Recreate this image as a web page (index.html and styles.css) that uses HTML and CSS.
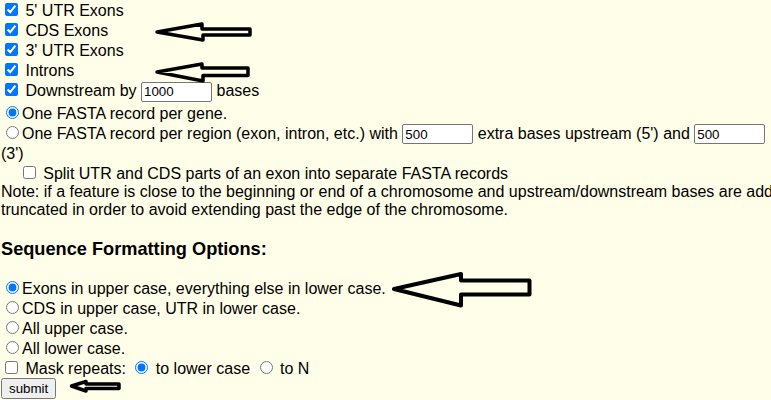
FILE: index.html
```html
<!DOCTYPE html>
<html>
<head>
<meta charset="utf-8">
<link rel="stylesheet" href="styles.css">
</head>
<body>
<div class="page">
<div class="opts">
<input type="checkbox" checked> 5' UTR Exons<br>
<input type="checkbox" checked> CDS Exons<br>
<input type="checkbox" checked> 3' UTR Exons<br>
<input type="checkbox" checked> Introns<br>
<input type="checkbox" checked> Downstream by <input type="text" class="num" value="1000"> bases<br>
<input type="radio" name="rec" checked>One FASTA record per gene.<br>
<input type="radio" name="rec">One FASTA record per region (exon, intron, etc.) with <input type="text" class="num" value="500"> extra bases upstream (5') and <input type="text" class="num" value="500"> (3')<br>
<span class="split">&nbsp;&nbsp;&nbsp;&nbsp;<input type="checkbox"> Split UTR and CDS parts of an exon into separate FASTA records</span><br>
<span class="note">Note: if a feature is close to the beginning or end of a chromosome and upstream/downstream bases are added, they may be<br>truncated in order to avoid extending past the edge of the chromosome.</span>
</div>
<h3 class="section">Sequence Formatting Options:</h3>
<div class="opts">
<input type="radio" name="fmt" checked>Exons in upper case, everything else in lower case.<br>
<input type="radio" name="fmt">CDS in upper case, UTR in lower case.<br>
<input type="radio" name="fmt">All upper case.<br>
<input type="radio" name="fmt">All lower case.<br>
<input type="checkbox"> Mask repeats: <input type="radio" name="mask" checked> to lower case <input type="radio" name="mask"> to N<br>
<input type="submit" class="btn" value="submit">
</div>
<svg class="arrows" width="771" height="400" viewBox="0 0 771 400">
<g fill="none" stroke="#000" stroke-width="3.5" stroke-linejoin="round">
<polygon points="157,32 202,24 202,29 250,29 250,35 203,35 203,40"/>
<polygon points="157,72 202,64 202,68 248,68 248,75.5 203,75.5 203,81"/>
<polygon points="394,289 461,274 461,280.5 529.5,280.5 529.5,294.5 461,294.5 461,305.5" stroke-width="4"/>
<polygon points="71.5,386 86,381.5 86,384 119,384 119,388.5 86,388.5 86,391" stroke-width="3.5"/>
</g>
</svg>
</div>
</body>
</html>
```
FILE: styles.css
```css
html {
  overflow: hidden;
  background: #fffee8;
}
body {
  margin: 0;
  padding: 0 0 0 1px;
  font-family: "Liberation Sans", Arial, sans-serif;
  font-size: 16px;
  color: #000;
  background: #fffee8;
}
.page {
  position: relative;
  width: 780px;
}
.opts {
  line-height: normal;
}
.note {
  white-space: nowrap;
}
.num {
  font-family: "Liberation Sans", Arial, sans-serif;
  font-size: 13.333px;
  width: 71px;
  height: 20px;
  box-sizing: border-box;
  padding: 1px 2px;
  border: 1px solid #767676;
  border-radius: 2px;
  margin-bottom: 1px;
}
.section {
  font-size: 18.2px;
  font-weight: bold;
  margin: 20px 0 18px;
}
.btn {
  font-family: "Liberation Sans", Arial, sans-serif;
  font-size: 13.333px;
}
.arrows {
  position: absolute;
  top: 0;
  left: -1px;
  pointer-events: none;
}
```
